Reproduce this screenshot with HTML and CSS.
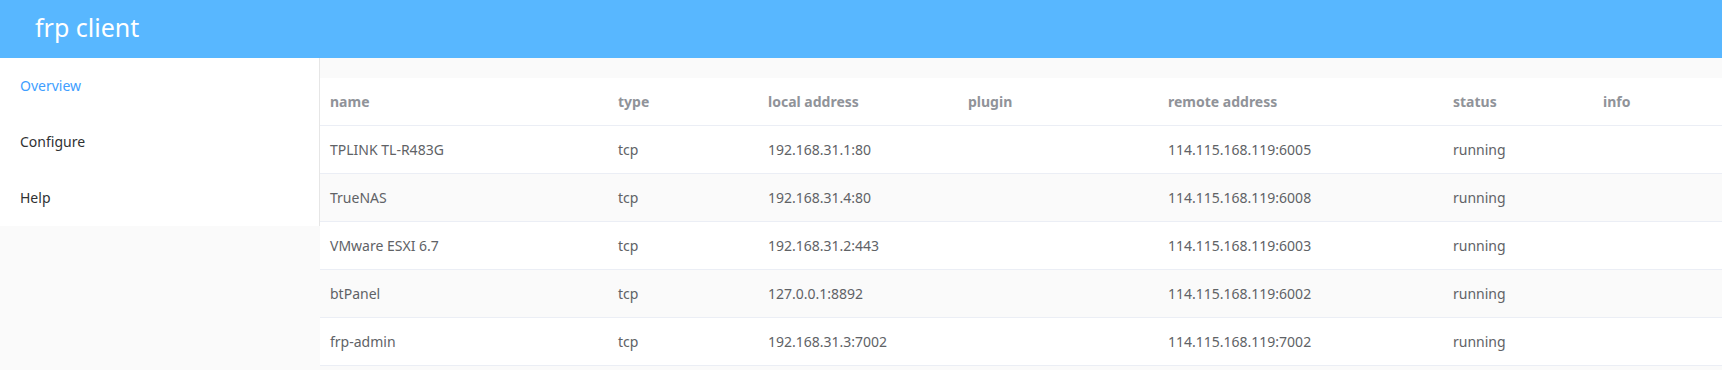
FILE: index.html
```html
<!DOCTYPE html>
<html lang="en">
<head>
    <meta charset="UTF-8">
    <meta name="viewport" content="width=device-width, initial-scale=1.0">
    <title>frp client</title>
    <link rel="stylesheet" href="styles.css">
</head>
<body>
    <header class="header-color">
        <a class="brand" href="#">frp client</a>
    </header>

    <section class="layout">
        <aside class="side-nav">
            <ul class="menu">
                <li class="menu-item active">Overview</li>
                <li class="menu-item">Configure</li>
                <li class="menu-item">Help</li>
            </ul>
        </aside>

        <div class="content">
            <table class="proxy-table">
                <colgroup>
                    <col class="col-name">
                    <col class="col-type">
                    <col class="col-local">
                    <col class="col-plugin">
                    <col class="col-remote">
                    <col class="col-status">
                    <col class="col-info">
                </colgroup>
                <thead>
                    <tr>
                        <th><div class="cell">name</div></th>
                        <th><div class="cell">type</div></th>
                        <th><div class="cell">local address</div></th>
                        <th><div class="cell">plugin</div></th>
                        <th><div class="cell">remote address</div></th>
                        <th><div class="cell">status</div></th>
                        <th><div class="cell">info</div></th>
                    </tr>
                </thead>
                <tbody>
                    <tr>
                        <td><div class="cell">TPLINK TL-R483G</div></td>
                        <td><div class="cell">tcp</div></td>
                        <td><div class="cell">192.168.31.1:80</div></td>
                        <td><div class="cell"></div></td>
                        <td><div class="cell">114.115.168.119:6005</div></td>
                        <td><div class="cell">running</div></td>
                        <td><div class="cell"></div></td>
                    </tr>
                    <tr class="striped">
                        <td><div class="cell">TrueNAS</div></td>
                        <td><div class="cell">tcp</div></td>
                        <td><div class="cell">192.168.31.4:80</div></td>
                        <td><div class="cell"></div></td>
                        <td><div class="cell">114.115.168.119:6008</div></td>
                        <td><div class="cell">running</div></td>
                        <td><div class="cell"></div></td>
                    </tr>
                    <tr>
                        <td><div class="cell">VMware ESXI 6.7</div></td>
                        <td><div class="cell">tcp</div></td>
                        <td><div class="cell">192.168.31.2:443</div></td>
                        <td><div class="cell"></div></td>
                        <td><div class="cell">114.115.168.119:6003</div></td>
                        <td><div class="cell">running</div></td>
                        <td><div class="cell"></div></td>
                    </tr>
                    <tr class="striped">
                        <td><div class="cell">btPanel</div></td>
                        <td><div class="cell">tcp</div></td>
                        <td><div class="cell">127.0.0.1:8892</div></td>
                        <td><div class="cell"></div></td>
                        <td><div class="cell">114.115.168.119:6002</div></td>
                        <td><div class="cell">running</div></td>
                        <td><div class="cell"></div></td>
                    </tr>
                    <tr>
                        <td><div class="cell">frp-admin</div></td>
                        <td><div class="cell">tcp</div></td>
                        <td><div class="cell">192.168.31.3:7002</div></td>
                        <td><div class="cell"></div></td>
                        <td><div class="cell">114.115.168.119:7002</div></td>
                        <td><div class="cell">running</div></td>
                        <td><div class="cell"></div></td>
                    </tr>
                </tbody>
            </table>
        </div>
    </section>
</body>
</html>
```

FILE: styles.css
```css
* {
    margin: 0;
    padding: 0;
    box-sizing: border-box;
}

body {
    background-color: #fafafa;
    font-family: "Noto Sans", "Open Sans", sans-serif;
    font-size: 14px;
}

.header-color {
    height: 58px;
    background: #58b7ff;
    display: flex;
    align-items: center;
}

.brand {
    color: #fff;
    text-decoration: none;
    font-size: 25px;
    line-height: 25px;
    margin-left: 20px;
    padding: 0 15px 4px;
}

.layout {
    display: flex;
    align-items: flex-start;
}

.side-nav {
    width: 320px;
    flex-shrink: 0;
    background-color: #fff;
    border-right: 1px solid #e6e6e6;
}

.menu {
    list-style-type: none;
}

.menu-item {
    height: 56px;
    line-height: 56px;
    padding: 0 20px;
    color: #303133;
    cursor: pointer;
}

.menu-item.active {
    color: #409eff;
}

.content {
    flex: 1;
    margin-top: 20px;
}

.proxy-table {
    width: 100%;
    table-layout: fixed;
    border-collapse: collapse;
    background-color: #fff;
}

.col-name { width: 288px; }
.col-type { width: 150px; }
.col-local { width: 200px; }
.col-plugin { width: 200px; }
.col-remote { width: 285px; }
.col-status { width: 150px; }

.proxy-table th,
.proxy-table td {
    padding: 12px 0;
    text-align: left;
    border-bottom: 1px solid #ebeef5;
}

.proxy-table th {
    color: #909399;
    font-weight: bold;
}

.proxy-table td {
    color: #606266;
}

.proxy-table .cell {
    padding: 0 10px;
    line-height: 23px;
    height: 23px;
    white-space: nowrap;
    overflow: hidden;
}

.proxy-table tr.striped td {
    background-color: #fafafa;
}
```
